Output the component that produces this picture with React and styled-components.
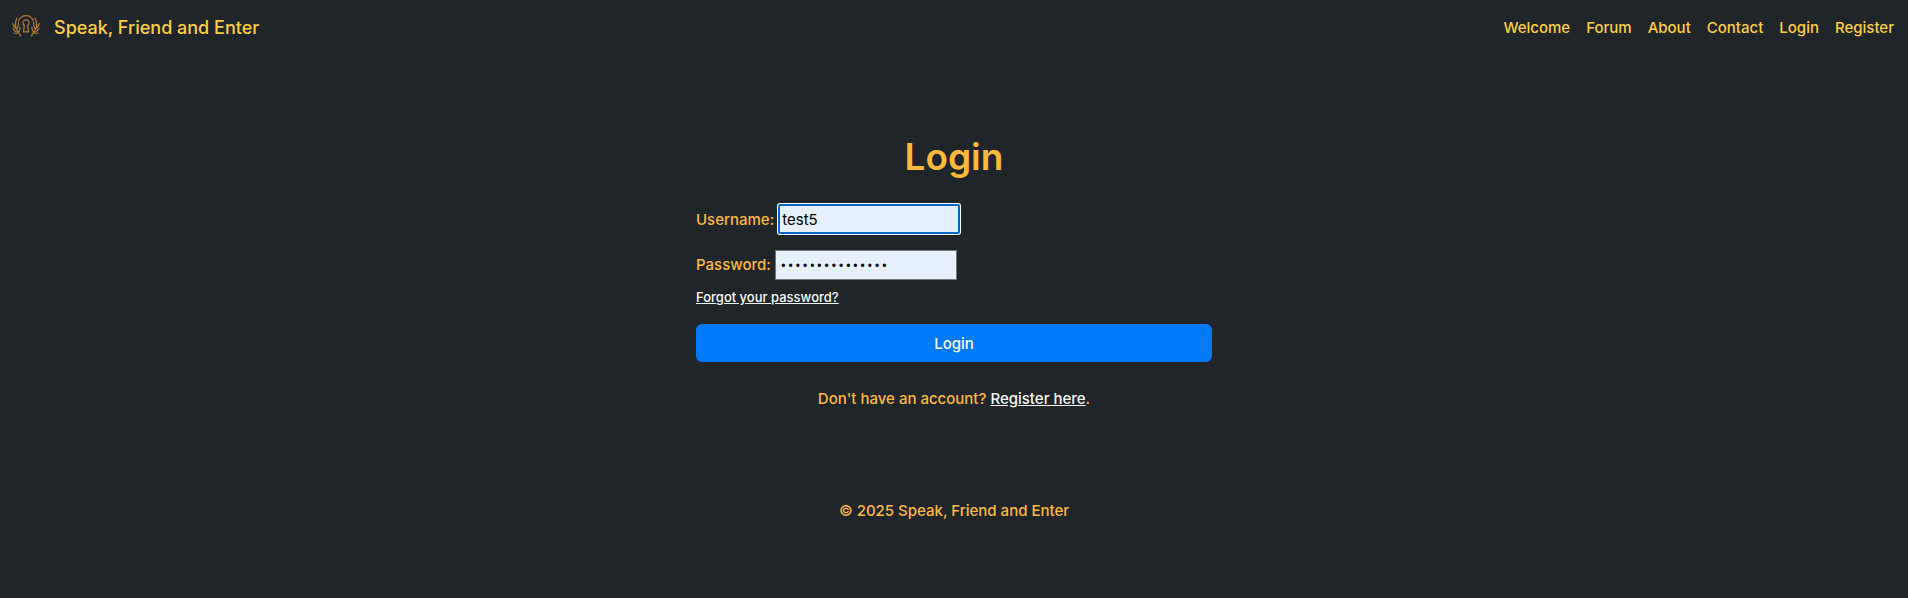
import React from "react";
import styled, { createGlobalStyle } from "styled-components";

const GlobalStyle = createGlobalStyle`
  *, *::before, *::after { box-sizing: border-box; }
  body {
    margin: 0;
    background: #202529;
    color: #ffba38;
    font-family: Inter, "Liberation Sans", sans-serif;
    font-size: 15px;
    font-weight: 500;
    line-height: 24px;
  }
`;

const Navbar = styled.header`
  display: flex;
  align-items: center;
  justify-content: space-between;
  min-height: 56px;
  padding: 8px 14px 8px 12px;
`;

const Brand = styled.a`
  display: flex;
  align-items: center;
  gap: 14px;
  color: #ffd03b;
  font-size: 18px;
  line-height: 30px;
  text-decoration: none;
`;

const NavLinks = styled.nav`
  display: flex;
  flex-wrap: wrap;
  gap: 16px;
`;

const NavLink = styled.a`
  color: #ffd03b;
  text-decoration: none;
`;

const Main = styled.main`
  width: 100%;
  max-width: 540px;
  margin: 0 auto;
  padding: 76px 12px 0;
`;

const Title = styled.h1`
  margin: 0 0 22px;
  font-size: 37px;
  font-weight: 600;
  line-height: 50px;
  text-align: center;
`;

const Form = styled.form`
  display: flex;
  flex-direction: column;
  gap: 16px;
`;

const Field = styled.div`
  display: flex;
  align-items: baseline;
  gap: 4px;
  height: 30px;
`;

const TextInput = styled.input`
  width: 182px;
  height: 30px;
  padding: ${(p) => (p.$active ? "0 2px" : "0 4px")};
  border: ${(p) => (p.$active ? "2px solid #0067cf" : "1px solid #767676")};
  border-radius: ${(p) => (p.$active ? "2px" : "0")};
  box-shadow: ${(p) => (p.$active ? "0 0 0 1px #fff" : "none")};
  outline: none;
  background: #e7f0fe;
  color: #000;
  font: inherit;
  font-weight: 400;

  &[type="password"] {
    padding-top: 4px;
    font-family: "Liberation Mono", monospace;
    font-size: 12px;
  }
`;

const PasswordGroup = styled.div`
  display: flex;
  flex-direction: column;
  align-items: flex-start;
  gap: 6px;
`;

const TextLink = styled.a`
  color: #f8f9fa;
  font-size: ${(p) => (p.$small ? "13px" : "15px")};
  line-height: ${(p) => (p.$small ? "22px" : "24px")};
  text-decoration: underline;
`;

const SubmitButton = styled.button`
  width: 100%;
  padding: 8px 12px 6px;
  border: 0;
  border-radius: 6px;
  background: #007afb;
  color: #fff;
  font: inherit;
  cursor: pointer;
`;

const Centered = styled.p`
  margin: 25px 0 0;
  text-align: center;
`;

const Footer = styled.footer`
  padding: 88px 12px 24px;
  text-align: center;
`;

const Branch = () => (
  <>
    <path d="M8.500 22C7 18.500 3.500 15.500 3 10.500" />
    <path d="M6.500 18.500C4 18 2 16.500 1 14.500" />
    <path d="M4.500 15C2.500 13.500 1 12 .6 9.500" />
    <path d="M3.500 12C3.200 9 3.600 6.500 5 4" />
    <path d="M4.500 15C6.200 13 6.600 11 6.500 8.500" />
    <path d="M6.500 18.500C7.800 16.500 8.200 15 8 13" />
    <path d="M5 19.500L2 19" />
  </>
);

const Logo = () => (
  <svg width="28" height="26" viewBox="0 1 28 26" fill="none" stroke="#b77c36" strokeWidth="1.200" strokeLinecap="round" aria-hidden="true">
    <path d="M6.500 7C8 3.500 10.500 1.600 14 1.600S20 3.500 21.500 7" />
    <path d="M12.300 11.500A3.100 3.100 0 1 1 15.700 11.500L16.500 17.800H11.500Z" />
    <Branch />
    <g transform="translate(28 0) scale(-1 1)">
      <Branch />
    </g>
  </svg>
);

const links = ["Welcome", "Forum", "About", "Contact", "Login", "Register"];

export default function App() {
  return (
    <>
      <GlobalStyle />
      <Navbar>
        <Brand href="#welcome">
          <Logo />
          Speak, Friend and Enter
        </Brand>
        <NavLinks aria-label="Main">
          {links.map((name) => (
            <NavLink key={name} href={`#${name.toLowerCase()}`}>{name}</NavLink>
          ))}
        </NavLinks>
      </Navbar>
      <Main>
        <Title>Login</Title>
        <Form onSubmit={(e) => e.preventDefault()}>
          <Field>
            <label htmlFor="username">Username:</label>
            <TextInput id="username" type="text" defaultValue="test5" $active />
          </Field>
          <PasswordGroup>
            <Field>
              <label htmlFor="password">Password:</label>
              <TextInput id="password" type="password" defaultValue="speakfriend2025" />
            </Field>
            <TextLink href="#forgot" $small>Forgot your password?</TextLink>
          </PasswordGroup>
          <SubmitButton type="submit">Login</SubmitButton>
        </Form>
        <Centered>
          Don't have an account? <TextLink href="#register">Register here</TextLink>.
        </Centered>
      </Main>
      <Footer>© 2025 Speak, Friend and Enter</Footer>
    </>
  );
}
